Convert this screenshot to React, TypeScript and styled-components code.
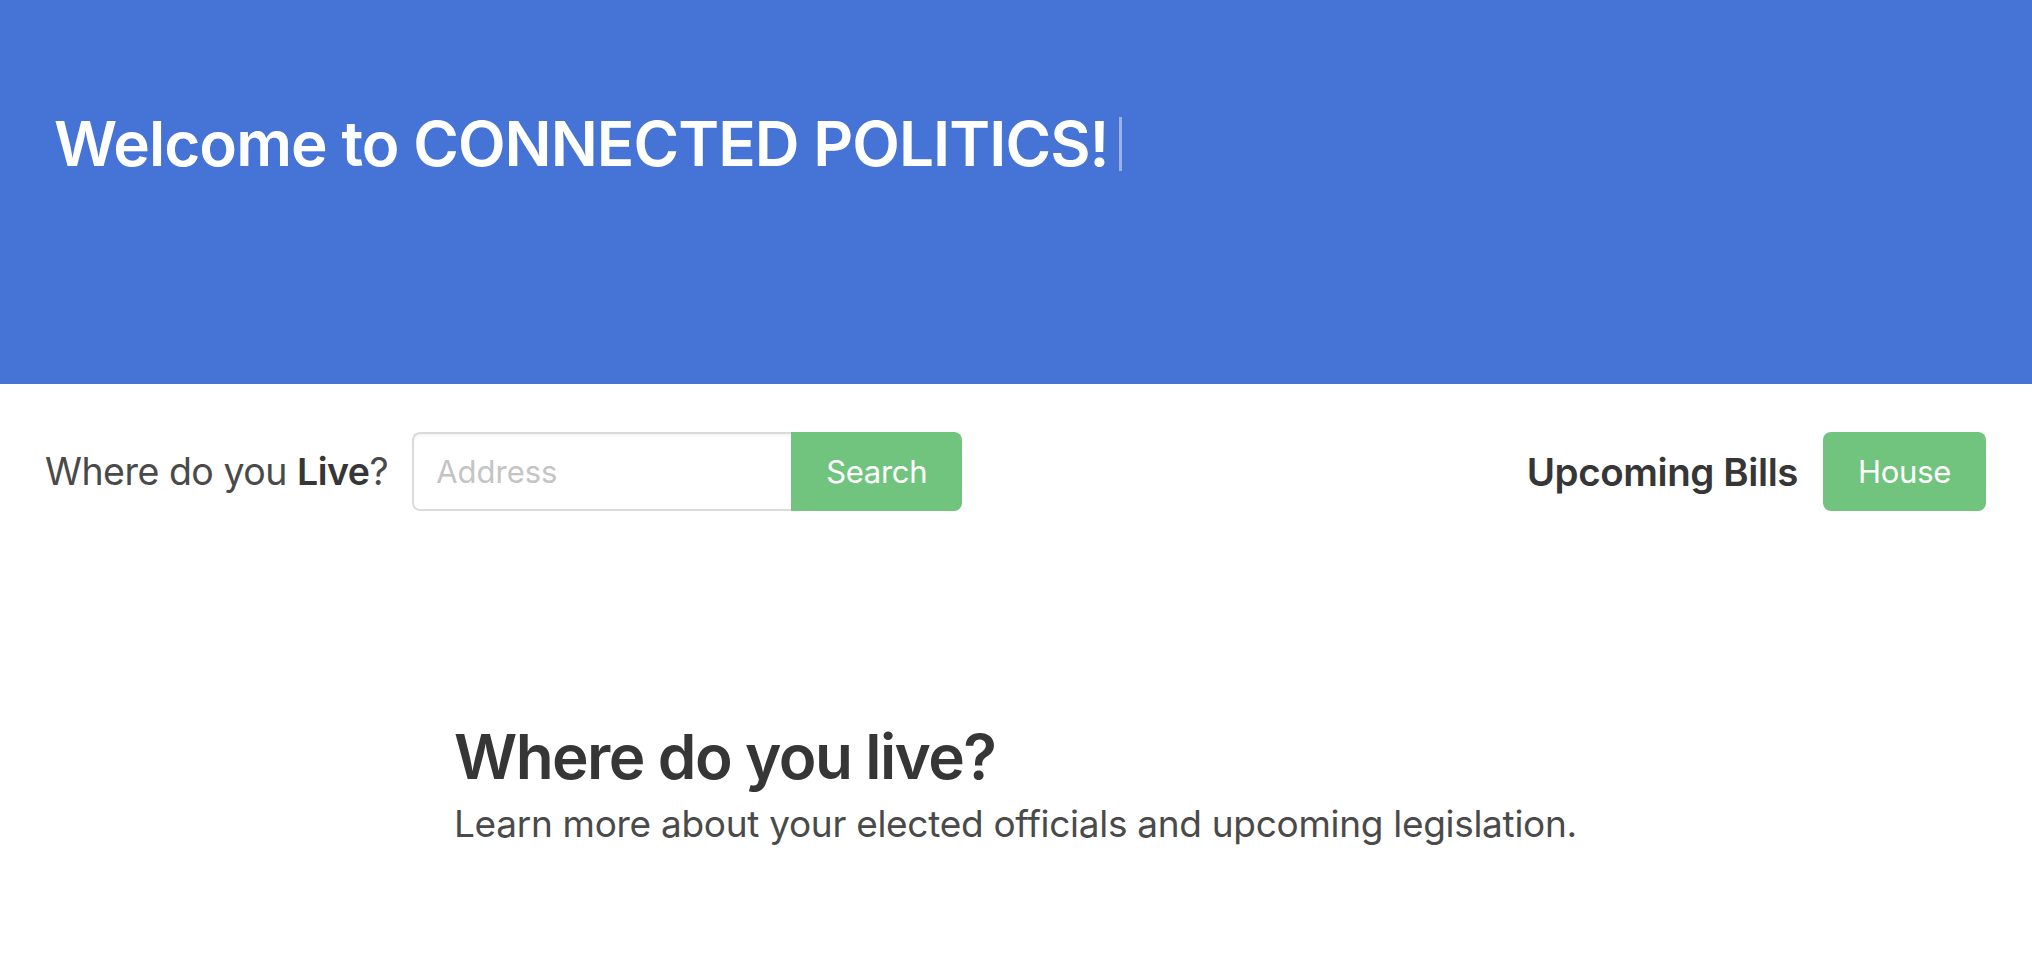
import React from "react";
import styled, { createGlobalStyle } from "styled-components";

const GlobalStyle = createGlobalStyle`
  html, body {
    margin: 0;
    padding: 0;
    background: #ffffff;
    font-family: Inter, "Noto Sans", "Liberation Sans", sans-serif;
  }
  * { box-sizing: border-box; }
`;

const Hero = styled.header`
  height: 384px;
  background: #4674d6;
  padding: 108px 54px 0;
`;

const HeroTitle = styled.h1`
  margin: 0;
  display: flex;
  align-items: center;
  font-size: 62px;
  font-weight: 600;
  line-height: 72px;
  color: #ffffff;
  letter-spacing: -0.95px;
`;

const Cursor = styled.span`
  display: inline-block;
  width: 3px;
  height: 54px;
  margin-left: 10px;
  background: rgba(255, 255, 255, 0.45);
`;

const Toolbar = styled.nav`
  display: flex;
  align-items: center;
  justify-content: space-between;
  padding: 48px 46px 0 45px;
`;

const Group = styled.div<{ gap: number }>`
  display: flex;
  align-items: center;
  gap: ${(p) => p.gap}px;
`;

const Label = styled.span`
  font-size: 37.5px;
  color: #4a4a4a;
  letter-spacing: -0.5px;
  b {
    font-weight: 600;
    color: #363636;
  }
`;

const Field = styled.div`
  display: flex;
  height: 79px;
`;

const AddressInput = styled.input`
  width: 379px;
  height: 100%;
  border: 2px solid #dbdbdb;
  border-right: none;
  border-radius: 8px 0 0 8px;
  padding: 0 22px;
  font-family: inherit;
  font-size: 31px;
  color: #363636;
  outline: none;
  box-shadow: inset 0 2px 3px rgba(10, 10, 10, 0.05);
  &::placeholder {
    color: #c4c4c4;
  }
`;

const GreenButton = styled.button<{ square?: boolean }>`
  height: 79px;
  border: none;
  background: #71c47d;
  color: #ffffff;
  font-family: inherit;
  font-size: 31px;
  padding: 0 35px;
  border-radius: ${(p) => (p.square ? "0 8px 8px 0" : "8px")};
  cursor: pointer;
  letter-spacing: -0.3px;
`;

const BillsLabel = styled.span`
  font-size: 38.5px;
  font-weight: 600;
  color: #363636;
  letter-spacing: -0.4px;
`;

const Intro = styled.section`
  width: 1124px;
  margin: 0 auto;
  padding-top: 208px;
`;

const IntroTitle = styled.h2`
  margin: 0;
  font-size: 62px;
  font-weight: 600;
  line-height: 76px;
  color: #363636;
  letter-spacing: -1.6px;
`;

const IntroSubtitle = styled.p`
  margin: 4px 0 0;
  font-size: 37px;
  line-height: 50px;
  color: #4a4a4a;
  letter-spacing: -0.3px;
  white-space: nowrap;
`;

export default function App() {
  return (
    <>
      <GlobalStyle />
      <Hero>
        <HeroTitle>
          Welcome to CONNECTED POLITICS!
          <Cursor />
        </HeroTitle>
      </Hero>
      <Toolbar>
        <Group gap={24}>
          <Label>
            Where do you <b>Live</b>?
          </Label>
          <Field>
            <AddressInput placeholder="Address" />
            <GreenButton square>Search</GreenButton>
          </Field>
        </Group>
        <Group gap={25}>
          <BillsLabel>Upcoming Bills</BillsLabel>
          <GreenButton>House</GreenButton>
        </Group>
      </Toolbar>
      <Intro>
        <IntroTitle>Where do you live?</IntroTitle>
        <IntroSubtitle>
          Learn more about your elected officials and upcoming legislation.
        </IntroSubtitle>
      </Intro>
    </>
  );
}
